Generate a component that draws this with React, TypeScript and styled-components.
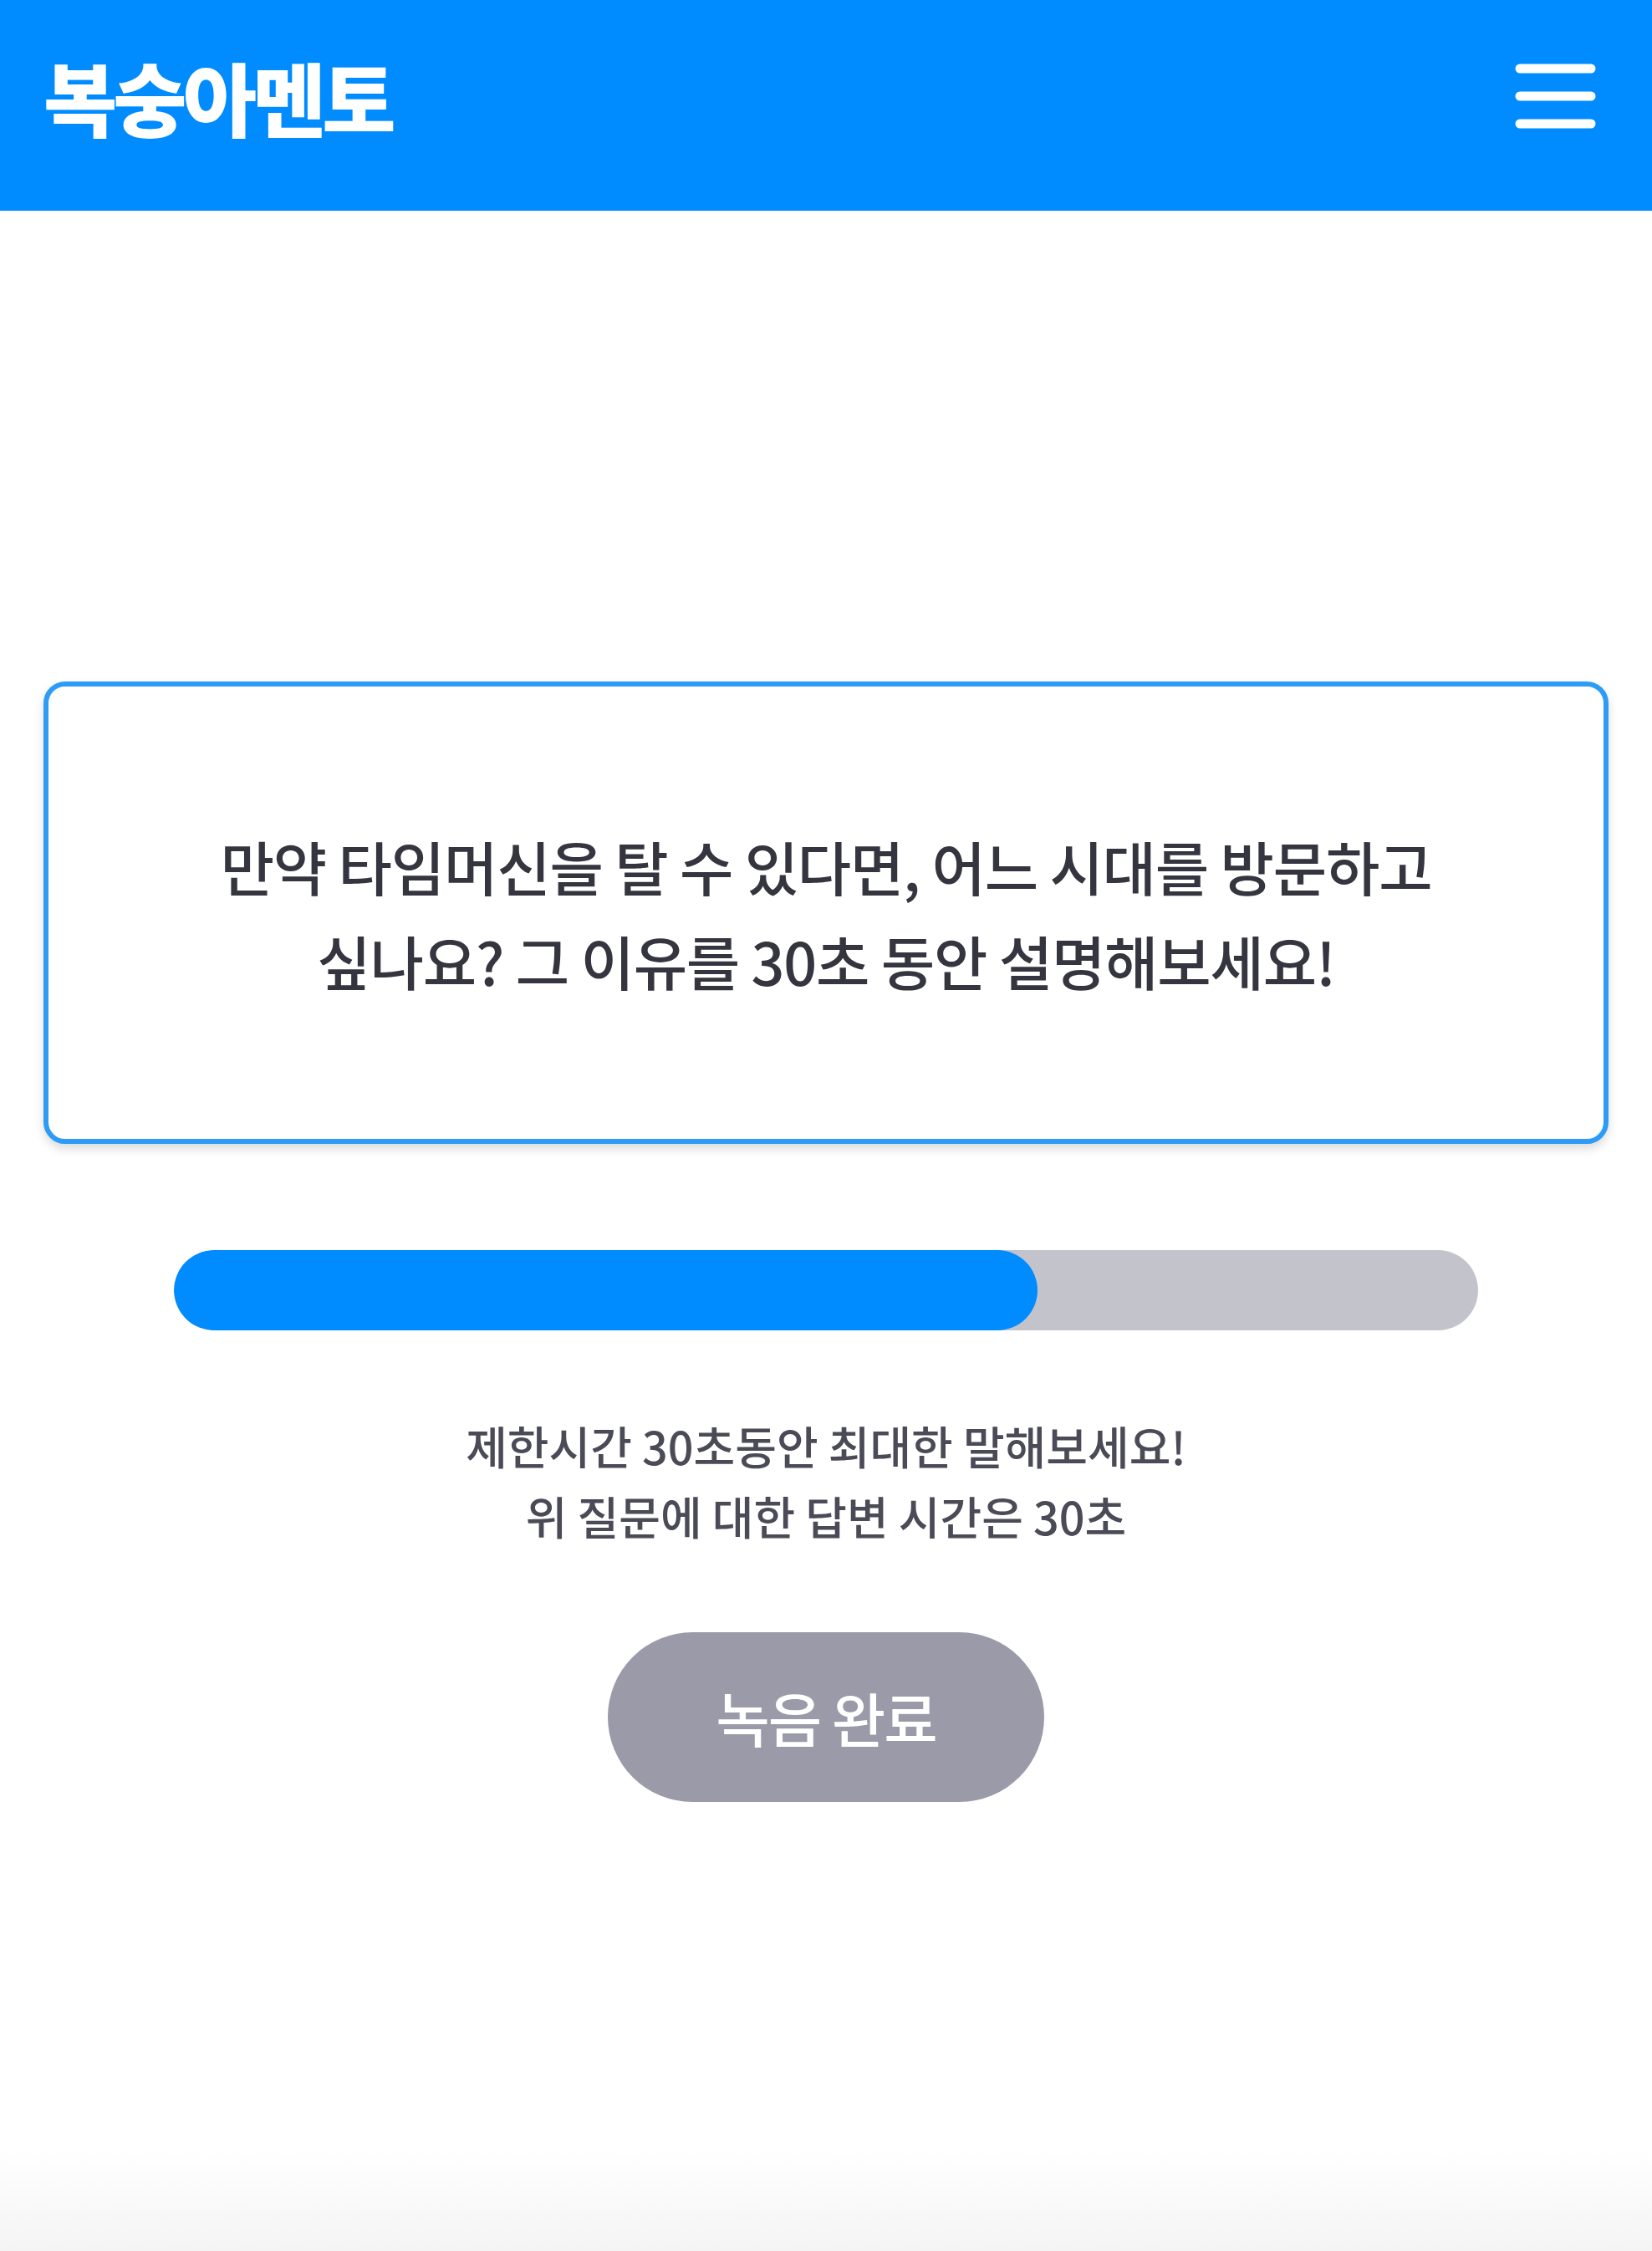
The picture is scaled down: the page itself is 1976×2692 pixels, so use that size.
import React from 'react';
import styled, { createGlobalStyle } from 'styled-components';

const GlobalStyle = createGlobalStyle`
  html, body {
    margin: 0;
    padding: 0;
    background: #ffffff;
    font-family: "Noto Sans CJK KR", "Noto Sans", sans-serif;
  }
  * {
    box-sizing: border-box;
  }
`;

const Page = styled.div`
  min-height: 2692px;
  display: flex;
  flex-direction: column;
  background: linear-gradient(to bottom, #ffffff 0, #ffffff 2570px, #f4f4f4 2692px);
`;

const Header = styled.header`
  height: 252px;
  background: #008cff;
  display: flex;
  align-items: center;
  justify-content: space-between;
  padding: 0 67px 22px 52px;
`;

const Logo = styled.h1`
  margin: 0;
  color: #ffffff;
  font-size: 96px;
  font-weight: 800;
  letter-spacing: -5px;
  line-height: 1;
`;

const MenuButton = styled.button`
  background: transparent;
  border: none;
  padding: 0;
  width: 97px;
  height: 82px;
  display: flex;
  align-items: center;
  justify-content: center;
  cursor: pointer;
`;

const Main = styled.main`
  display: flex;
  flex-direction: column;
  align-items: center;
  padding: 563px 52px 0;
`;

const QuestionCard = styled.section`
  width: 100%;
  height: 553px;
  border: 6px solid #2e9cf6;
  border-radius: 26px;
  box-shadow: 0 6px 12px rgba(0, 0, 0, 0.14);
  background: #ffffff;
  display: flex;
  align-items: center;
  justify-content: center;
`;

const QuestionText = styled.p`
  margin: 0;
  text-align: center;
  color: #35353f;
  font-size: 70px;
  font-weight: 500;
  line-height: 113px;
  letter-spacing: -1.2px;
`;

const ProgressTrack = styled.div`
  margin-top: 127px;
  width: 1560px;
  height: 96px;
  border-radius: 48px;
  background: #c3c3cc;
  overflow: hidden;
`;

const ProgressFill = styled.div`
  height: 100%;
  border-radius: 48px;
  background: #008cff;
`;

const Caption = styled.p`
  margin: 96px 0 0;
  text-align: center;
  color: #4b4b57;
  font-size: 54px;
  font-weight: 500;
  line-height: 84px;
  letter-spacing: 0;
`;

const DoneButton = styled.button`
  margin-top: 97px;
  width: 522px;
  height: 203px;
  border: none;
  border-radius: 102px;
  background: #9a9aa8;
  color: #ffffff;
  font-family: inherit;
  font-size: 70px;
  font-weight: 500;
  letter-spacing: -2px;
  cursor: pointer;
`;

function MenuIcon() {
  return (
    <svg width="97" height="82" viewBox="0 0 97 82" fill="none">
      <line x1="6" y1="8" x2="91" y2="8" stroke="#ffffff" strokeWidth="11" strokeLinecap="round" />
      <line x1="6" y1="41" x2="91" y2="41" stroke="#ffffff" strokeWidth="11" strokeLinecap="round" />
      <line x1="6" y1="74" x2="91" y2="74" stroke="#ffffff" strokeWidth="11" strokeLinecap="round" />
    </svg>
  );
}

export default function App() {
  const progress = 66.2;

  return (
    <Page>
      <GlobalStyle />
      <Header>
        <Logo>복숭아멘토</Logo>
        <MenuButton aria-label="메뉴">
          <MenuIcon />
        </MenuButton>
      </Header>
      <Main>
        <QuestionCard>
          <QuestionText>
            만약 타임머신을 탈 수 있다면, 어느 시대를 방문하고
            <br />
            싶나요? 그 이유를 30초 동안 설명해보세요!
          </QuestionText>
        </QuestionCard>
        <ProgressTrack>
          <ProgressFill style={{ width: `${progress}%` }} />
        </ProgressTrack>
        <Caption>
          제한시간 30초동안 최대한 말해보세요!
          <br />
          위 질문에 대한 답변 시간은 30초
        </Caption>
        <DoneButton>녹음 완료</DoneButton>
      </Main>
    </Page>
  );
}
